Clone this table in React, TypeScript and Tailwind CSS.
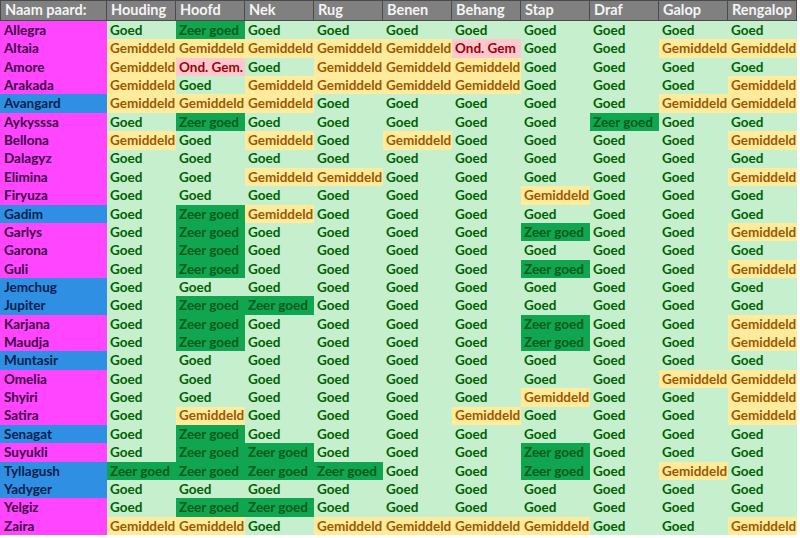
import React from "react";

type Grade = "G" | "Z" | "M" | "O" | "O.";

const COLS = ["Houding", "Hoofd", "Nek", "Rug", "Benen", "Behang", "Stap", "Draf", "Galop", "Rengalop"];

// naam, kleur (m = magenta, b = blauw), scores
const ROWS: [string, "m" | "b", string][] = [
  ["Allegra", "m", "G Z G G G G G G G G"],
  ["Altaia", "m", "M M M M M O G G M M"],
  ["Amore", "m", "M O. G M M M G G G G"],
  ["Arakada", "m", "M G M M M M G G G M"],
  ["Avangard", "b", "M M M G G G G G M M"],
  ["Aykysssa", "m", "G Z G G G G G Z G G"],
  ["Bellona", "m", "M G M G M G G G G M"],
  ["Dalagyz", "m", "G G G G G G G G G G"],
  ["Elimina", "m", "G G M M G G G G G M"],
  ["Firyuza", "m", "G G G G G G M G G G"],
  ["Gadim", "b", "G Z M G G G G G G G"],
  ["Garlys", "m", "G Z G G G G Z G G M"],
  ["Garona", "m", "G Z G G G G G G G G"],
  ["Guli", "m", "G Z G G G G Z G G M"],
  ["Jemchug", "b", "G G G G G G G G G G"],
  ["Jupiter", "b", "G Z Z G G G G G G G"],
  ["Karjana", "m", "G Z G G G G Z G G M"],
  ["Maudja", "m", "G Z G G G G Z G G M"],
  ["Muntasir", "b", "G G G G G G G G G G"],
  ["Omelia", "m", "G G G G G G G G M M"],
  ["Shyiri", "m", "G G G G G G M G G M"],
  ["Satira", "m", "G M G G G M G G G M"],
  ["Senagat", "b", "G Z G G G G G G G G"],
  ["Suyukli", "m", "G Z Z G G G Z G G G"],
  ["Tyllagush", "b", "Z Z Z Z G G Z G M G"],
  ["Yadyger", "b", "G G G G G G G G G G"],
  ["Yelgiz", "m", "G Z Z G G G G G G G"],
  ["Zaira", "m", "M M G M M M M G G M"],
];

const STYLE: Record<Grade, { label: string; cls: string }> = {
  G: { label: "Goed", cls: "bg-[#c6efce] text-[#006100]" },
  Z: { label: "Zeer goed", cls: "bg-[#10a64f] text-[#005a1c]" },
  M: { label: "Gemiddeld", cls: "bg-[#ffeb9c] text-[#9c5700]" },
  O: { label: "Ond. Gem", cls: "bg-[#ffc7ce] text-[#9c0006]" },
  "O.": { label: "Ond. Gem.", cls: "bg-[#ffc7ce] text-[#9c0006]" },
};

export default function App() {
  return (
    <div
      className="h-[538px] w-[800px] overflow-hidden bg-white text-[13.5px] font-bold leading-none"
      style={{ fontFamily: "Lato, 'Open Sans', sans-serif" }}
    >
      <div className="grid w-[797px] grid-cols-[107px_repeat(10,69px)]">
        {/* kopregel */}
        <div className="flex h-[21px] items-center border border-[#4a4a4a] bg-[#808080] pl-[4px] text-[14.5px] text-[#f4f4f4]">
          Naam paard:
        </div>
        {COLS.map((c) => (
          <div
            key={c}
            className="flex h-[21px] items-center border border-l-0 border-[#4a4a4a] bg-[#808080] pl-[4px] text-[14.5px] text-[#f4f4f4]"
          >
            {c}
          </div>
        ))}

        {ROWS.map(([name, color, scores]) => (
          <React.Fragment key={name}>
            <div
              className={
                "flex h-[18.36px] items-center pl-[4px] pt-px " +
                (color === "m" ? "bg-[#ff45ff] text-[#3d0543]" : "bg-[#2f8fe3] text-[#07204d]")
              }
            >
              {name}
            </div>
            {scores.split(" ").map((g, i) => {
              const s = STYLE[g as Grade];
              return (
                <div key={i} className={"flex h-[18.36px] items-center pl-[3px] pt-px " + s.cls}>
                  {s.label}
                </div>
              );
            })}
          </React.Fragment>
        ))}
      </div>
    </div>
  );
}
